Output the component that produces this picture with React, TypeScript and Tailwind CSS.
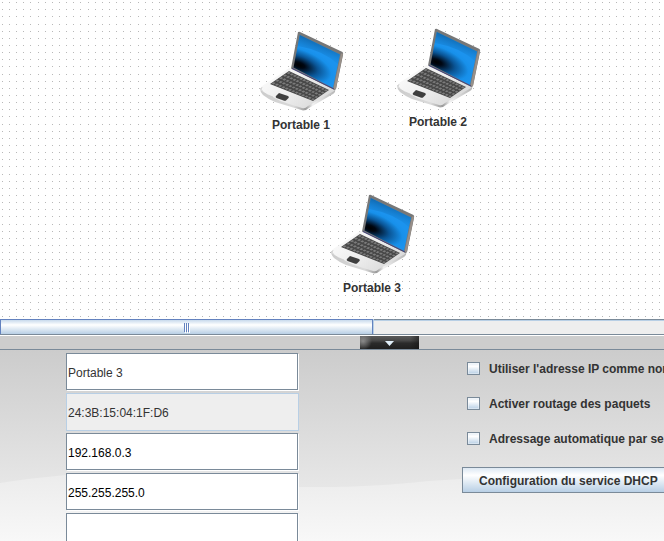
import React, { useId } from "react";

const devices = [
  { name: "Portable 1", place: "left-[258px] top-[28px]" },
  { name: "Portable 2", place: "left-[395px] top-[25px]" },
  { name: "Portable 3", place: "left-[329px] top-[191px]" },
];

const fields = [
  { label: "Nom", value: "Portable 3", tone: "text-[#333333]" },
  { label: "Adresse MAC", value: "24:3B:15:04:1F:D6", tone: "", locked: true },
  { label: "Adresse IP", value: "192.168.0.3", tone: "text-black" },
  { label: "Masque", value: "255.255.255.0", tone: "text-black" },
  { label: "Passerelle", value: "", tone: "text-black" },
];

const options = [
  "Utiliser l'adresse IP comme nom",
  "Activer routage des paquets",
  "Adressage automatique par serveur DHCP",
];

const dotColumns = [2, 9, 16, 23, 30, 38, 45];
const dotRows = [2, 9, 16, 24, 31, 38, 45];

function DotGrid() {
  return (
    <svg className="absolute inset-0 h-full w-full" shapeRendering="crispEdges" aria-hidden="true">
      <defs>
        <pattern id="dots" width="50" height="50" patternUnits="userSpaceOnUse">
          {dotRows.map((y) =>
            dotColumns.map((x) => <rect key={`${x}-${y}`} x={x} y={y} width="1" height="1" fill="#b8b8b8" />),
          )}
        </pattern>
      </defs>
      <rect width="100%" height="100%" fill="url(#dots)" />
    </svg>
  );
}

// Maps a point of the unit square onto the tilted keyboard surface.
function key(u: number, v: number) {
  const x = 31 + 40 * u - 19 * v + 3 * u * v;
  const y = 43 + 19 * u + 13 * v - 2 * u * v;
  return `${x.toFixed(2)},${y.toFixed(2)}`;
}

function Laptop() {
  const id = useId().replace(/[^a-zA-Z0-9]/g, "");
  const rows = [0, 1, 2, 3, 4];
  const cols = [0, 1, 2, 3, 4, 5, 6, 7, 8, 9, 10, 11, 12];
  return (
    <svg width="86" height="86" viewBox="0 0 86 86" className="block" aria-hidden="true">
      <defs>
        <radialGradient id={`${id}s`} gradientUnits="userSpaceOnUse" cx="0" cy="0" r="1" gradientTransform="translate(41 37) rotate(20) scale(40 18)">
          <stop offset="0" stopColor="#000000" />
          <stop offset="0.15" stopColor="#000713" />
          <stop offset="0.5" stopColor="#0a5596" />
          <stop offset="0.85" stopColor="#1790ea" />
          <stop offset="1" stopColor="#1b93ee" />
        </radialGradient>
        <linearGradient id={`${id}t`} gradientUnits="userSpaceOnUse" x1="60" y1="11" x2="55" y2="25">
          <stop offset="0" stopColor="#0c4f88" stopOpacity="0.75" />
          <stop offset="1" stopColor="#0d6cb8" stopOpacity="0.15" />
        </linearGradient>
        <linearGradient id={`${id}b`} x1="0" y1="0" x2="1" y2="0.6">
          <stop offset="0" stopColor="#ffffff" />
          <stop offset="0.6" stopColor="#ececec" />
          <stop offset="1" stopColor="#d9d9d9" />
        </linearGradient>
        <linearGradient id={`${id}e`} x1="0" y1="0" x2="1" y2="0">
          <stop offset="0" stopColor="#cccccc" />
          <stop offset="0.45" stopColor="#dadada" />
          <stop offset="0.61" stopColor="#9a9a9a" />
          <stop offset="0.7" stopColor="#f2f2f2" />
          <stop offset="1" stopColor="#b5b5b5" />
        </linearGradient>
      </defs>
      <path d="M2 60 Q2 64 5 67 Q10 71 17 74 L45 82.500 Q48 82.500 51 80 L75 66 Q78 64 77 61 Z" fill={`url(#${id}e)`} />
      <path d="M32 40 Q29 41 27 43 L4 58 Q1 61 5 64 Q9 67 15 69 Q23 74 31 76 L44 80 Q47 81 50 78 L76 63 L77 61 Z" fill={`url(#${id}b)`} />
      <path d="M4 59 Q2 61 5 64 Q9 67 15 69" fill="none" stroke="#c8c8c8" strokeWidth="0.7" />
      <path d="M40 4 L41.500 3.800 L84.500 24 Q85.500 25 85 27 L78 61 L76.500 62 L33 40.500 Z" fill="#777777" />
      <path d="M83 25.500 L85 25.500 L77.800 61.500 L75.500 60.500 Z" fill="#999089" />
      <path d="M41.800 7 L82 26.500 L75 60 L35.500 39.500 Z" fill={`url(#${id}s)`} />
      <path d="M41.800 7 L82 26.500 L80 36 Q64 22 39.500 18 Z" fill={`url(#${id}t)`} />
      <path d="M34 40.500 L76 61" stroke="#34347c" strokeWidth="0.800" />
      <polygon points={`${key(0, 0)} ${key(1, 0)} ${key(1, 1)} ${key(0, 1)}`} fill="#474747" />
      {rows.map((r) =>
        cols.map((c) => {
          const u = (c + 0.18) / 13;
          const v = (r + 0.2) / 5;
          return (
            <polygon
              key={`${r}-${c}`}
              points={`${key(u, v)} ${key(u + 0.05, v)} ${key(u + 0.05, v + 0.11)} ${key(u, v + 0.11)}`}
              fill="#7c7c7c"
            />
          );
        }),
      )}
      <path d="M21 65 L30 68 Q31.500 69 30.500 70 L28 72.500 Q27 73 25.500 72.500 L18.500 70 Q17 69 18 68 Z" fill="#3f3f3f" />
    </svg>
  );
}

function Panel() {
  return (
    <section className="relative h-[191px] shrink-0 overflow-hidden bg-[#cccccc]">
      <svg className="absolute inset-0 h-full w-full" viewBox="0 0 664 191" preserveAspectRatio="none" aria-hidden="true">
        <defs>
          <linearGradient id="upper" x1="0" y1="0" x2="0" y2="191" gradientUnits="userSpaceOnUse">
            <stop offset="0" stopColor="#cccccc" />
            <stop offset="0.75" stopColor="#e8e8e8" />
            <stop offset="1" stopColor="#efefef" />
          </linearGradient>
          <linearGradient id="lower" x1="0" y1="120" x2="0" y2="191" gradientUnits="userSpaceOnUse">
            <stop offset="0" stopColor="#ebebeb" />
            <stop offset="1" stopColor="#f8f8f8" />
          </linearGradient>
        </defs>
        <rect width="664" height="191" fill="url(#upper)" />
        <path d="M0 133 Q32 128 66 125 C150 118 190 137 298 137 C390 138 410 131 462 129 Q560 120 664 126 V191 H0 Z" fill="url(#lower)" />
      </svg>
      <form className="relative flex items-start pt-[3px]" onSubmit={(e) => e.preventDefault()}>
        <div className="ml-[66px] flex w-[233px] shrink-0 flex-col gap-[2px]">
          {fields.map((f) => (
            <div key={f.label} className="h-[38px] shrink-0">
              {f.locked ? (
                <input
                  aria-label={f.label}
                  defaultValue={f.value}
                  disabled
                  className="block h-[38px] w-[233px] border border-[#b8cfe5] bg-[#eeeeee] pt-[2px] pl-px text-xs text-[#333333] outline-none"
                />
              ) : (
                <input
                  aria-label={f.label}
                  defaultValue={f.value}
                  className={`block h-[37px] w-[232px] border border-[#7a8a99] bg-white pt-[3px] pl-px text-xs shadow-[1px_1px_0_#ffffff] outline-none ${f.tone}`}
                />
              )}
            </div>
          ))}
        </div>
        <div className="ml-[163px] flex shrink-0 flex-col items-start pt-[1px] font-bold whitespace-nowrap text-[#333333]">
          <div className="flex flex-col pl-[5px]">
            {options.map((text) => (
              <label key={text} className="flex h-[35px] items-center gap-[9px] pb-[6px] text-xs">
                <input
                  type="checkbox"
                  className="m-0 size-[13px] appearance-none border border-[#7a8a99] bg-linear-to-b from-[#e3ecf5] via-white via-30% to-[#b8cfe5] shadow-[inset_0_0_0_1px_#ffffff66]"
                />
                {text}
              </label>
            ))}
          </div>
          <button
            type="button"
            className="mt-[8px] h-[26px] border border-[#7a8a99] bg-linear-to-b from-[#dde8f3] via-white via-30% to-[#b8cfe5] px-4 pt-[2px] text-xs font-bold"
          >
            Configuration du service DHCP
          </button>
        </div>
      </form>
    </section>
  );
}

export default function App() {
  return (
    <div className="flex h-screen flex-col overflow-hidden bg-white font-['Liberation_Sans',Arial,sans-serif] text-xs">
      <main className="relative min-h-0 flex-1 overflow-hidden bg-white">
        <DotGrid />
        {devices.map((d) => (
          <figure key={d.name} className={`absolute m-0 w-[86px] ${d.place}`}>
            <Laptop />
            <figcaption className="mt-[3px] text-center text-xs font-bold text-[#333333]">{d.name}</figcaption>
          </figure>
        ))}
      </main>

      <div className="flex h-[16px] shrink-0 border-y border-t-[#7a8a99] border-b-[#7a8a99] bg-[#eeeeee] shadow-[inset_0_1px_0_#b8cfe5]">
        <div
          role="scrollbar"
          aria-label="Défilement horizontal"
          aria-orientation="horizontal"
          aria-controls="root"
          aria-valuenow={0}
          className="-mt-px flex h-[15px] w-[373px] items-center justify-center gap-px border border-b-0 border-[#6382bf] bg-linear-to-b from-[#c8daec] via-white via-35% to-[#b8cfe5] shadow-[1px_0_0_#b8cfe5]"
        >
          <span className="h-[9px] w-px bg-[#6382bf] shadow-[1px_1px_0_#ffffff]" />
          <span className="h-[9px] w-px bg-[#6382bf] shadow-[1px_1px_0_#ffffff]" />
          <span className="h-[9px] w-px bg-[#6382bf] shadow-[1px_1px_0_#ffffff]" />
        </div>
      </div>

      <div className="flex h-[15px] shrink-0 border-t border-b border-t-white border-b-[#7a8a99] bg-[#cdcdcd] pl-[360px]">
        <button
          type="button"
          aria-label="Réduire le panneau"
          className="flex h-[13px] w-[59px] items-center justify-center bg-[radial-gradient(ellipse_9px_9px_at_3px_5px,#8a8a8a,transparent),linear-gradient(to_right,transparent_85%,#11111188),linear-gradient(to_bottom,#5a5a5a,#474747_35%,#2b2b2b_55%,#1f1f1f)]"
        >
          <svg width="9" height="5" viewBox="0 0 9 5" className="mt-[2px] block" aria-hidden="true">
            <path d="M0 0 H9 L4.500 5 Z" fill="#e2f0fb" />
          </svg>
        </button>
      </div>

      <Panel />
    </div>
  );
}
